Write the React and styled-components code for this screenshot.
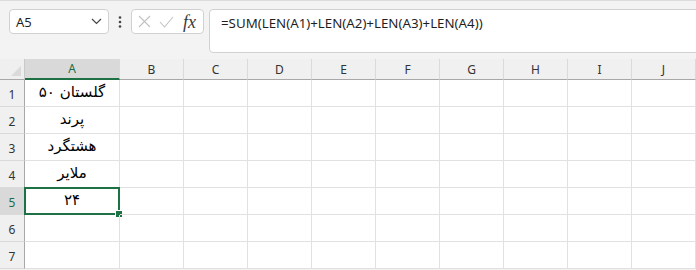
import React from "react";
import styled, { createGlobalStyle } from "styled-components";

const GlobalStyle = createGlobalStyle`
  html, body {
    margin: 0;
    padding: 0;
    background: #ffffff;
    overflow: hidden;
  }
  body {
    font-family: "Noto Sans", "Open Sans", "DejaVu Sans", sans-serif;
  }
`;

const columns = ["A", "B", "C", "D", "E", "F", "G", "H", "I", "J"];
const values = ["گلستان ۵۰", "پرند", "هشتگرد", "ملایر", "۲۴", "", ""];
const activeRow = 5;

const Page = styled.div`
  width: 696px;
  height: 270px;
  overflow: hidden;
  background: #f3f3f3;
`;

const Toolbar = styled.div`
  display: flex;
  align-items: flex-start;
  height: 59px;
  box-sizing: border-box;
  padding: 8px 0 0 9px;
  border-top: 1px solid #dcdcdc;
`;

const NameBox = styled.div`
  width: 100px;
  height: 25px;
  box-sizing: border-box;
  display: flex;
  align-items: center;
  justify-content: space-between;
  padding: 0 6px 0 6px;
  background: #fff;
  border: 1px solid #d1d1d1;
  border-radius: 4px;
  font-size: 13px;
  color: #1f1f1f;
`;

const Dots = styled.div`
  width: 22px;
  height: 25px;
  display: flex;
  align-items: center;
  justify-content: center;
`;

const FxBox = styled.div`
  width: 73px;
  height: 25px;
  box-sizing: border-box;
  display: flex;
  align-items: center;
  gap: 8px;
  padding: 0 4px 0 6px;
  background: #fff;
  border: 1px solid #d1d1d1;
  border-radius: 4px;
`;

const FxLabel = styled.span`
  font-family: "Liberation Serif", "DejaVu Serif", serif;
  font-style: italic;
  font-size: 18px;
  line-height: 1;
  color: #3a3a3a;
  margin-left: 1px;
`;

const FormulaBar = styled.div`
  flex: 1;
  height: 44px;
  margin-left: 5px;
  margin-right: -8px;
  box-sizing: border-box;
  padding: 4px 11px;
  background: #fff;
  border: 1px solid #d1d1d1;
  border-radius: 4px;
  font-size: 13.3px;
  color: #1f1f1f;
`;

const Grid = styled.div`
  display: grid;
  grid-template-columns: 25px 95px repeat(9, 64px);
  grid-template-rows: 21px repeat(7, 27px);
  background: #fff;
`;

const Corner = styled.div`
  position: relative;
  background: #efefef;
  border-right: 1px solid #c9c9c9;
  border-bottom: 1px solid #a8a8a8;
  &::after {
    content: "";
    position: absolute;
    right: 3px;
    bottom: 3px;
    border-left: 10px solid transparent;
    border-bottom: 10px solid #dadada;
  }
`;

const ColHead = styled.div`
  display: flex;
  align-items: center;
  justify-content: center;
  font-size: 12px;
  background: ${(p) => (p.$active ? "#d9d9d9" : "#f0f0f0")};
  color: ${(p) => (p.$active ? "#1e6b43" : "#333")};
  border-right: 1px solid #dadada;
  border-bottom: ${(p) => (p.$active ? "2px solid #1e7145" : "1px solid #a8a8a8")};
  box-sizing: border-box;
`;

const RowHead = styled.div`
  display: flex;
  align-items: flex-end;
  justify-content: center;
  padding-bottom: 3px;
  box-sizing: border-box;
  font-size: 12px;
  background: ${(p) => (p.$active ? "#d9d9d9" : "#f0f0f0")};
  color: ${(p) => (p.$active ? "#1e6b43" : "#333")};
  border-right: 1px solid #a8a8a8;
  border-bottom: 1px solid #dadada;
`;

const Cell = styled.div`
  position: relative;
  display: flex;
  align-items: center;
  justify-content: center;
  box-sizing: border-box;
  border-right: 1px solid #e1e1e1;
  border-bottom: 1px solid #e1e1e1;
  font-family: "DejaVu Sans", "Noto Sans", sans-serif;
  font-size: 15px;
  color: #000;
  direction: rtl;
  padding-bottom: 3px;
`;

const Selection = styled.div`
  position: absolute;
  left: -1px;
  top: -1px;
  right: -1px;
  bottom: -1px;
  border: 2px solid #1e7145;
  pointer-events: none;
  &::after {
    content: "";
    position: absolute;
    right: -5px;
    bottom: -5px;
    width: 6px;
    height: 6px;
    background: #1e7145;
    border: 1px solid #fff;
  }
`;

const Chevron = () => (
  <svg width="11" height="7" viewBox="0 0 11 7">
    <path d="M1 1l4.5 4.5L10 1" fill="none" stroke="#444" strokeWidth="1.2" />
  </svg>
);

const VDots = () => (
  <svg width="4" height="12" viewBox="0 0 4 12">
    <circle cx="2" cy="1.5" r="1.3" fill="#444" />
    <circle cx="2" cy="6" r="1.3" fill="#444" />
    <circle cx="2" cy="10.5" r="1.3" fill="#444" />
  </svg>
);

const Cross = () => (
  <svg width="13" height="13" viewBox="0 0 13 13">
    <path d="M1 1l11 11M12 1L1 12" stroke="#c2c2c2" strokeWidth="1.1" />
  </svg>
);

const Check = () => (
  <svg width="15" height="12" viewBox="0 0 15 12">
    <path d="M1 6l4.5 5L14 1" fill="none" stroke="#c2c2c2" strokeWidth="1.1" />
  </svg>
);

const App = () => {
  return (
    <Page>
      <GlobalStyle />
      <Toolbar>
        <NameBox>
          <span>A5</span>
          <Chevron />
        </NameBox>
        <Dots>
          <VDots />
        </Dots>
        <FxBox>
          <Cross />
          <Check />
          <FxLabel>fx</FxLabel>
        </FxBox>
        <FormulaBar>=SUM(LEN(A1)+LEN(A2)+LEN(A3)+LEN(A4))</FormulaBar>
      </Toolbar>
      <Grid>
        <Corner />
        {columns.map((c) => (
          <ColHead key={c} $active={c === "A"}>
            {c}
          </ColHead>
        ))}
        {values.map((v, i) => (
          <React.Fragment key={i}>
            <RowHead $active={i + 1 === activeRow}>{i + 1}</RowHead>
            <Cell>
              {v}
              {i + 1 === activeRow && <Selection />}
            </Cell>
            {columns.slice(1).map((c) => (
              <Cell key={c} />
            ))}
          </React.Fragment>
        ))}
      </Grid>
    </Page>
  );
};

export default App;
